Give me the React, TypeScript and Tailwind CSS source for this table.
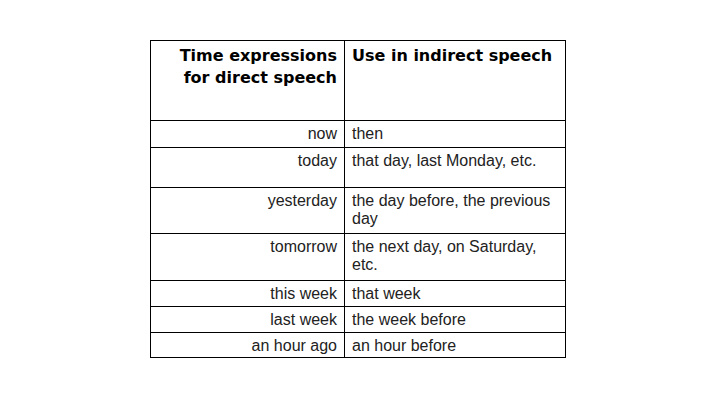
import React from "react";

const rows: { l: string; r: string; h: number }[] = [
  { l: "now", r: "then", h: 27 },
  { l: "today", r: "that day, last Monday, etc.", h: 40 },
  { l: "yesterday", r: "the day before, the previous day", h: 46 },
  { l: "tomorrow", r: "the next day, on Saturday, etc.", h: 47 },
  { l: "this week", r: "that week", h: 26 },
  { l: "last week", r: "the week before", h: 26 },
  { l: "an hour ago", r: "an hour before", h: 25 },
];

export default function App() {
  return (
    <div className="w-[720px] h-[405px] bg-white pl-[150px] pt-[40px]">
      <table
        className="border-collapse w-[415px] table-fixed text-black"
        style={{ fontFamily: '"Liberation Sans", Arial, sans-serif' }}
      >
        <colgroup>
          <col className="w-[194px]" />
          <col className="w-[221px]" />
        </colgroup>
        <tbody>
          <tr className="h-[80px]">
            <td
              className="border border-black align-top text-right pr-[7px] pt-[4px] font-bold text-[16px] leading-[22px]"
              style={{ fontFamily: '"DejaVu Sans", Verdana, sans-serif' }}
            >
              Time expressions for direct speech
            </td>
            <td
              className="border border-black align-top text-left pl-[7px] pt-[4px] font-bold text-[16px] leading-[22px]"
              style={{ fontFamily: '"DejaVu Sans", Verdana, sans-serif' }}
            >
              Use in indirect speech
            </td>
          </tr>
          {rows.map((row) => (
            <tr key={row.l} style={{ height: row.h }}>
              <td className="border border-black align-top text-right pr-[7px] pt-[4px] text-[16px] leading-[18px] text-[#222]">
                {row.l}
              </td>
              <td className="border border-black align-top text-left pl-[7px] pr-[4px] pt-[4px] text-[16px] leading-[18px] text-[#222]">
                {row.r}
              </td>
            </tr>
          ))}
        </tbody>
      </table>
    </div>
  );
}
